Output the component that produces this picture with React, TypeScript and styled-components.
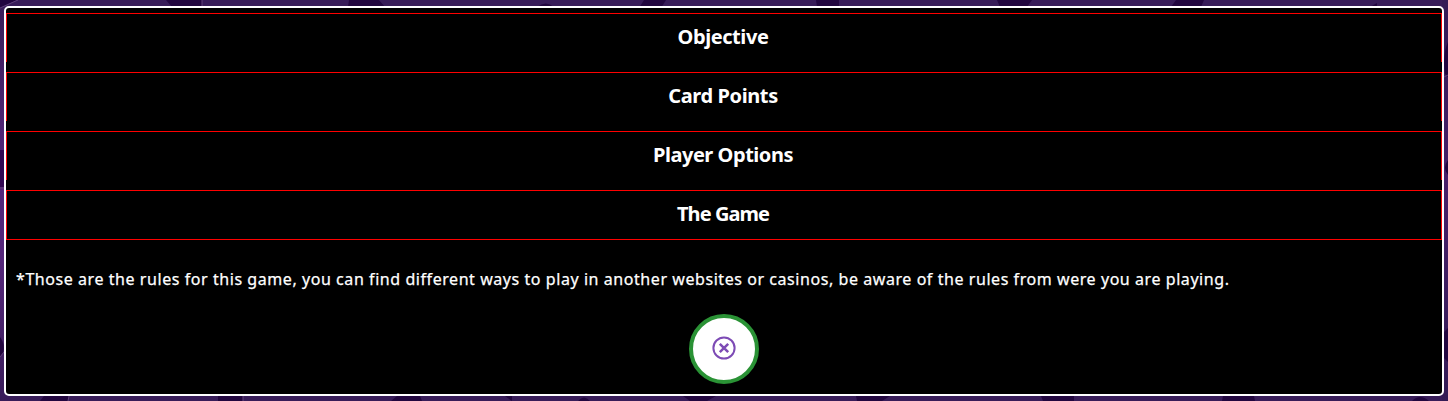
import React from "react";
import styled, { createGlobalStyle } from "styled-components";

const GlobalStyle = createGlobalStyle`
  * { box-sizing: border-box; }
  body { margin: 0; background: #381c59; overflow: hidden; }
`;

const Page = styled.main`
  position: relative;
  height: 401px;
  padding: 6px 4px 5px;
  font-family: "Noto Sans", "Open Sans", sans-serif;
  color: #fff;
`;

const Backdrop = styled.svg`
  position: absolute;
  inset: 0;
  z-index: -1;
`;

const Panel = styled.section`
  display: flex;
  flex-direction: column;
  height: 390px;
  padding-top: 5px;
  border: 2px solid #fff;
  border-radius: 5px;
  background: #000;
`;

const RuleList = styled.div`
  display: flex;
  flex-direction: column;
  gap: 10px;
`;

const RuleHeader = styled.h2<{ $spacing: number }>`
  height: 49px;
  margin: 0;
  padding-right: 2px;
  border: 1px solid #f00;
  border-bottom: 0;
  font-size: 20px;
  font-weight: 700;
  line-height: 46px;
  letter-spacing: ${(p) => p.$spacing}px;
  text-align: center;

  &:last-child {
    height: 50px;
    border-bottom: 1px solid #f00;
  }
`;

const Note = styled.p`
  margin: 27px 10px 0;
  font-size: 16px;
  line-height: 24px;
  letter-spacing: 0.563px;
  white-space: nowrap;
  -webkit-text-stroke: 0.25px #fff;
`;

const CloseButton = styled.button`
  display: flex;
  align-items: center;
  justify-content: center;
  align-self: center;
  width: 70px;
  height: 70px;
  margin: 23px 0 0;
  padding: 0 1px 2px 0;
  border: 4px solid #2a9235;
  border-radius: 50%;
  background: #fff;
  color: #7d4bb5;
`;

const rules = [
  { title: "Objective", spacing: -0.42 },
  { title: "Card Points", spacing: -0.38 },
  { title: "Player Options", spacing: -0.46 },
  { title: "The Game", spacing: -0.95 },
];

export default function App() {
  return (
    <Page>
      <GlobalStyle />
      <Backdrop width="1448" height="401" viewBox="0 0 1448 401" aria-hidden="true">
        <defs>
          <linearGradient id="dusk" x1="0" y1="0" x2="0" y2="1">
            <stop offset="0" stopColor="#381d59" />
            <stop offset="0.4" stopColor="#54267a" />
            <stop offset="0.65" stopColor="#54267a" />
            <stop offset="1" stopColor="#381c59" />
          </linearGradient>
          <linearGradient id="duskRight" x1="0" y1="0" x2="0" y2="1">
            <stop offset="0" stopColor="#341b55" />
            <stop offset="0.45" stopColor="#482069" />
            <stop offset="1" stopColor="#341b55" />
          </linearGradient>
        </defs>
        <rect width="1448" height="401" fill="#381c59" />
        <rect width="6" height="401" fill="url(#dusk)" />
        <rect x="1442" width="6" height="401" fill="url(#duskRight)" />
        <g fill="#22063f">
          <path d="M0 0H17L0 8ZM166 0H202V7H172ZM349 0H379L385 7H348ZM537 7Q546 0 554 7ZM644 0H666L661 8H639ZM816 0H839V7H817ZM997 0H1032L1027 7H1000ZM1176 0H1204L1201 7H1171ZM1370 7L1377 3V7Z" />
          <path d="M44 396H69L68 401H40ZM218 396H243V401H218ZM397 396H420L422 401H391ZM505 396H512V401ZM578 401Q584 394 590 401ZM683 396H716L707 401H690ZM856 396H890L882 401H857ZM1041 396H1074V401H1043ZM1223 396H1254L1255 401H1222ZM1412 401Q1420 393 1429 401Z" />
          <path d="M1448 42Q1442 55 1445 74L1448 77ZM1448 160Q1442 168 1448 175ZM1448 328L1444 332V358L1448 362Z" />
          <path d="M0 337Q6 345 3 353L0 357Z" />
        </g>
        <rect y="150" width="4" height="37" fill="#310853" />
        <path d="M0 8L18 0M202 0V7M0 188H4M0 357L4 352M69 396L68 401M243 396V401M1444 77L1448 75" fill="none" stroke="#60417b" strokeWidth="1" />
      </Backdrop>
      <Panel>
        <RuleList>
          {rules.map((rule) => (
            <RuleHeader key={rule.title} $spacing={rule.spacing}>
              {rule.title}
            </RuleHeader>
          ))}
        </RuleList>
        <Note>
          *Those are the rules for this game, you can find different ways to play in another websites or casinos, be
          aware of the rules from were you are playing.
        </Note>
        <CloseButton aria-label="Close rules">
          <svg width="24" height="24" viewBox="0 0 24 24" fill="none" stroke="currentColor">
            <circle cx="12" cy="12" r="10.6" strokeWidth="2" />
            <path d="M7.8 7.8L16.2 16.2M16.2 7.8L7.8 16.2" strokeWidth="2.5" />
          </svg>
        </CloseButton>
      </Panel>
    </Page>
  );
}
